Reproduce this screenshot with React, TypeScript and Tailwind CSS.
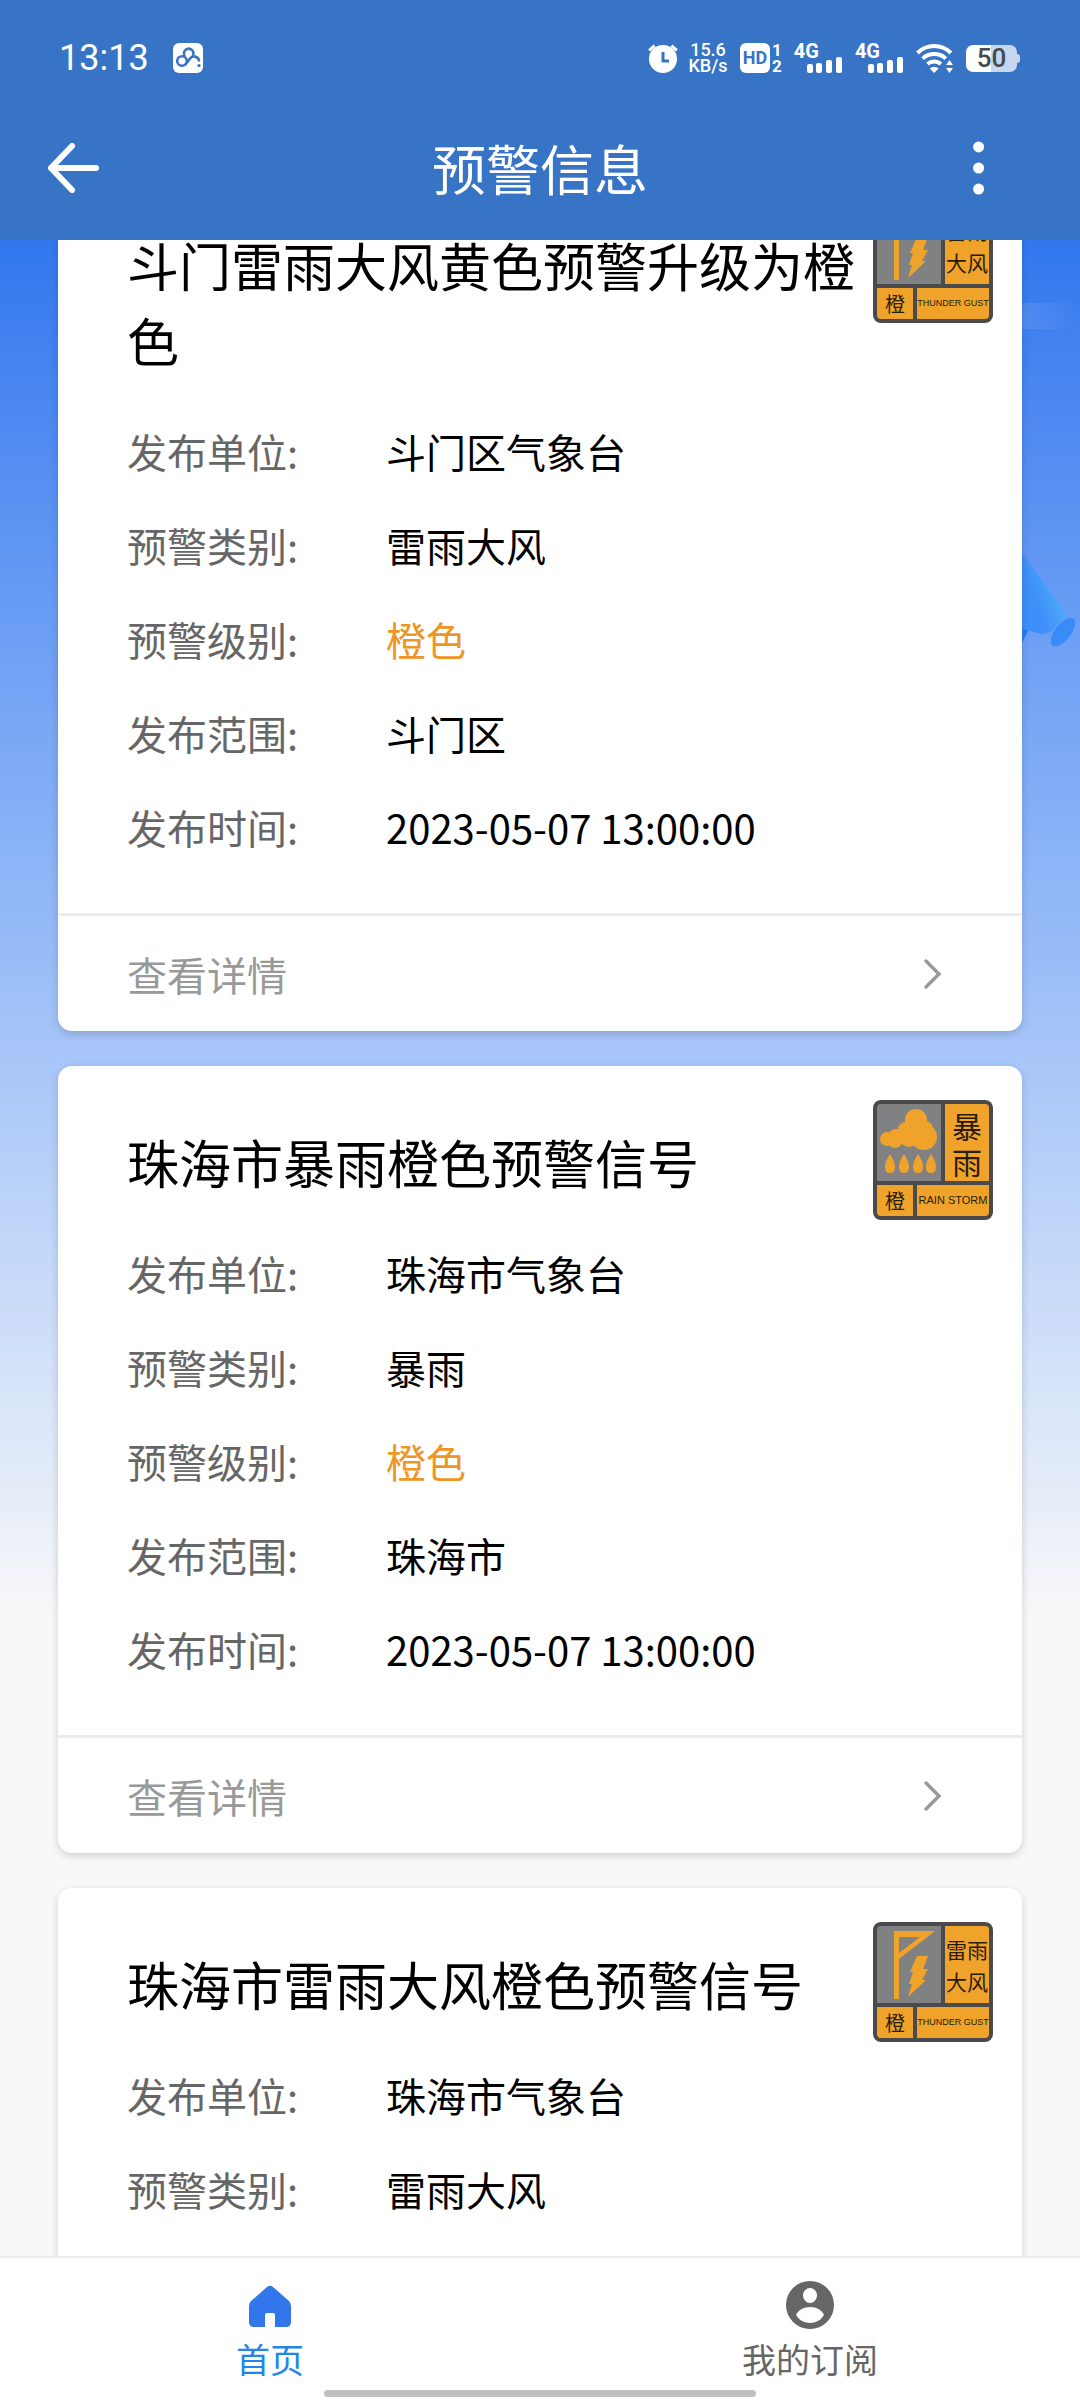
import {useEffect, useRef} from 'react';

type BadgeKind = 'rain' | 'gust';

interface Warning {
    id: number;
    title: string;
    org: string;
    type: string;
    level: string;
    area: string;
    time: string;
    badge: BadgeKind;
}

const WARNINGS: Warning[] = [
    {
        id: 1,
        title: '斗门雷雨大风黄色预警升级为橙色',
        org: '斗门区气象台',
        type: '雷雨大风',
        level: '橙色',
        area: '斗门区',
        time: '2023-05-07 13:00:00',
        badge: 'gust',
    },
    {
        id: 2,
        title: '珠海市暴雨橙色预警信号',
        org: '珠海市气象台',
        type: '暴雨',
        level: '橙色',
        area: '珠海市',
        time: '2023-05-07 13:00:00',
        badge: 'rain',
    },
    {
        id: 3,
        title: '珠海市雷雨大风橙色预警信号',
        org: '珠海市气象台',
        type: '雷雨大风',
        level: '橙色',
        area: '珠海市',
        time: '2023-05-07 13:00:00',
        badge: 'gust',
    },
];

const SAVED_SCROLL = 106;

function SignalBars() {
    return (
        <span className="flex items-end">
            <span className="self-start font-bold text-[20px] leading-4">4G</span>
            <svg width="36" height="30" viewBox="0 0 36 30" fill="currentColor" className="-ml-3">
                <rect x="0" y="21" width="6" height="9" rx="2" />
                <rect x="9" y="20" width="6" height="10" rx="2" />
                <rect x="19" y="17" width="6" height="13" rx="2" />
                <rect x="29" y="14" width="6" height="16" rx="2" />
            </svg>
        </span>
    );
}

function StatusBar() {
    return (
        <div className="flex h-[116px] items-center justify-between pl-[59px] pr-[60px] font-[Roboto,'Liberation_Sans',sans-serif]">
            <div className="flex items-center gap-6">
                <span className="text-[36px] leading-[38px]">13:13</span>
                <svg width="30" height="30" viewBox="0 0 30 30">
                    <rect width="30" height="30" rx="6" fill="#fff" />
                    <g fill="none" stroke="#3874c6" strokeWidth="2.6" strokeLinecap="round">
                        <circle cx="9" cy="18" r="4.8" />
                        <path d="M11.4 12.6a4.8 4.8 0 1 1 8.6 0" />
                        <path d="M12.6 21.2l4.6-5.8a5 5 0 0 1 8.8 2" />
                    </g>
                    <circle cx="26" cy="22.6" r="1.6" fill="#3874c6" />
                </svg>
            </div>
            <div className="flex items-center">
                <svg width="30" height="30" viewBox="0 0 30 30">
                    <circle cx="15" cy="16" r="14" fill="#fff" />
                    <path d="M1.2 7.4L6.6 2.6M28.8 7.4l-5.4-4.8" stroke="#fff" strokeWidth="3" />
                    <path d="M15 9v9h6" fill="none" stroke="#3874c6" strokeWidth="3" />
                </svg>
                <span className="ml-3 flex w-9 flex-col items-center text-[18px] font-medium leading-4">
                    <span>15.6</span>
                    <span>KB/s</span>
                </span>
                <span className="ml-[14px] flex h-[30px] w-[30px] items-center justify-center rounded-[6px] bg-white text-[18px] font-bold leading-none text-[#3874c6]">
                    HD
                </span>
                <span className="ml-[2px] flex flex-col text-[17px] font-bold leading-4">
                    <span>1</span>
                    <span>2</span>
                </span>
                <span className="ml-3 flex gap-3">
                    <SignalBars />
                    <SignalBars />
                </span>
                <svg width="38" height="30" viewBox="0 0 38 30" className="ml-3">
                    <g fill="none" stroke="#fff" strokeWidth="4">
                        <path d="M1.500 10a23.5 23.5 0 0 1 33.400 0" />
                        <path d="M6.6 15.6a17 17 0 0 1 23.2 0" />
                        <path d="M11.4 21a10.4 10.4 0 0 1 13.6 0" />
                    </g>
                    <path d="M13.8 25.4a6.4 6.4 0 0 1 8.8 0L18.2 30z" fill="#fff" />
                    <path d="M33.5 17l3.4 5h-6.8zM33.5 30l3.4-5h-6.8z" fill="#fff" />
                </svg>
                <span className="ml-3 flex items-center">
                    <span className="flex h-[27px] w-[51px] items-center justify-center rounded-[7px] bg-[linear-gradient(90deg,#fff_50%,#c5d6ee_50%)] text-[26px] font-medium leading-none text-[#454a50]">
                        50
                    </span>
                    <span className="h-[9px] w-[3px] rounded-r bg-[#c5d6ee]" />
                </span>
            </div>
        </div>
    );
}

function GustPicture() {
    return (
        <svg viewBox="0 0 64 77" className="h-full w-full" fill="#f0a32a">
            <path d="M17 5h41L22 33v40h-5zM22 11v16l21-16z" fillRule="evenodd" />
            <path d="M40 30h11l-5 13h5l-6 11h4L31 71l4-13h-3l4-12h-3z" />
        </svg>
    );
}

function RainPicture() {
    return (
        <svg viewBox="0 0 64 77" className="h-full w-full" fill="#f0a32a">
            <circle cx="39" cy="16" r="11" />
            <circle cx="29" cy="26" r="8" />
            <circle cx="48" cy="25" r="8" />
            <circle cx="47" cy="33" r="13" />
            <circle cx="32" cy="33" r="10" />
            <circle cx="19" cy="33" r="8" />
            <circle cx="18" cy="37" r="7" />
            <circle cx="10" cy="35" r="7" />
            <path d="M13 50c3 5 5 8 5 13q0 6-5 6t-5-6c0-5 2-8 5-13z" />
            <path d="M27 50c3 5 5 8 5 13q0 6-5 6t-5-6c0-5 2-8 5-13z" />
            <path d="M41 50c3 5 5 8 5 13q0 6-5 6t-5-6c0-5 2-8 5-13z" />
            <path d="M54 50c3 5 5 8 5 13q0 6-5 6t-5-6c0-5 2-8 5-13z" />
        </svg>
    );
}

function WarningBadge({kind}: {kind: BadgeKind}) {
    const gust = kind === 'gust';
    return (
        <div className="flex size-[120px] shrink-0 flex-col gap-1 rounded-lg bg-[#4a4a4c] p-1 text-[#2a1c04]">
            <div className="flex h-[77px] gap-1">
                <div className="w-16 rounded-tl-sm bg-[#808183]">
                    {gust ? <GustPicture /> : <RainPicture />}
                </div>
                <div className="flex flex-1 flex-col items-center justify-center rounded-tr-sm bg-[#f0a32a]">
                    {gust ? (
                        <>
                            <span className="text-[21px] leading-8">雷雨</span>
                            <span className="text-[21px] leading-8">大风</span>
                        </>
                    ) : (
                        <>
                            <span className="text-[30px] leading-9">暴</span>
                            <span className="text-[30px] leading-9">雨</span>
                        </>
                    )}
                </div>
            </div>
            <div className="flex h-[31px] gap-1">
                <div className="flex w-9 items-center justify-center rounded-bl-sm bg-[#f0a32a] text-[20px] leading-none">
                    橙
                </div>
                <div className="flex flex-1 items-center justify-center whitespace-nowrap rounded-br-sm bg-[#f0a32a] font-['Liberation_Sans_Narrow','Liberation_Sans',sans-serif] leading-none">
                    {gust ? (
                        <span className="text-[9px]">THUNDER GUST</span>
                    ) : (
                        <span className="text-[11px]">RAIN STORM</span>
                    )}
                </div>
            </div>
        </div>
    );
}

function WarningCard({warning}: {warning: Warning}) {
    const rows = [
        {label: '发布单位:', value: warning.org},
        {label: '预警类别:', value: warning.type},
        {label: '预警级别:', value: warning.level, color: 'text-[#ee9526]'},
        {label: '发布范围:', value: warning.area},
        {label: '发布时间:', value: warning.time},
    ];

    return (
        <article className="rounded-[14px] bg-white shadow-[0_3px_9px_rgba(0,0,0,0.16)]">
            <div className="flex items-start justify-between pl-[69px] pr-[29px]">
                <h2 className="w-[734px] pt-[58px] text-[52px] leading-[75px] text-black">
                    {warning.title}
                </h2>
                {/* the badge may reach below a one-line title */}
                <div className="-mb-6 pt-[34px]">
                    <WarningBadge kind={warning.badge} />
                </div>
            </div>
            <dl className="px-[69px] pb-[39px] pt-[27px] text-[40px] leading-[94px]">
                {rows.map((row) => (
                    <div key={row.label} className="flex">
                        <dt className="w-[259px] text-[#666]">{row.label}</dt>
                        <dd className={row.color ?? 'text-black'}>{row.value}</dd>
                    </div>
                ))}
            </dl>
            <a
                href="#detail"
                className="flex h-[118px] items-center justify-between border-t-[3px] border-[#ededed] pl-[69px] pr-20 text-[40px] text-[#999]"
            >
                查看详情
                <svg width="18" height="30" viewBox="0 0 18 30" fill="none" stroke="currentColor" strokeWidth="3.4" strokeLinecap="round">
                    <path d="M2 2l13 13L2 28" />
                </svg>
            </a>
        </article>
    );
}

function Backdrop() {
    return (
        <div className="absolute inset-0 bg-[#f8f8f8]">
            <div className="relative h-[1380px] bg-linear-to-b from-[#3277ee] to-[#f8f8f8]">
                <div className="absolute right-0 top-[63px] h-[26px] w-[58px] bg-linear-to-r from-white/10 to-transparent" />
                <svg width="64" height="110" viewBox="0 0 64 110" className="absolute right-0 top-[305px]">
                    <defs>
                        <linearGradient id="cone" x1="0" y1="1" x2="1" y2="0.4">
                            <stop offset="0.45" stopColor="#3f8ffa" />
                            <stop offset="1" stopColor="#55b8f8" />
                        </linearGradient>
                    </defs>
                    <path d="M0 72l16 6L0 110z" fill="#2a7df0" />
                    <path d="M0 0l51 69-14 16q-8 6-16 3L0 82z" fill="url(#cone)" />
                    <ellipse cx="47" cy="87" rx="8" ry="17" transform="rotate(38 47 87)" fill="#378cf8" />
                </svg>
            </div>
        </div>
    );
}

function TabBar() {
    return (
        <nav className="relative z-10 border-t-2 border-[#ebebeb] bg-white">
            <div className="grid h-[132px] grid-cols-2 text-[34px] leading-[50px]">
                <a href="#home" className="flex flex-col items-center pt-5 text-[#2186e8]">
                    <svg width="52" height="56" viewBox="0 0 52 56" fill="#3276ec">
                        <path d="M29 9l16 14q2 2 2 5v16q0 5-5 5H31V37q0-2-2-2h-6q-2 0-2 2v12H10q-5 0-5-5V28q0-3 2-5L23 9q3-2.600 6 0z" />
                    </svg>
                    首页
                </a>
                <a href="#subscriptions" className="flex flex-col items-center pt-5 text-[#666]">
                    <svg width="52" height="56" viewBox="0 0 52 56">
                        <circle cx="26" cy="27" r="24" fill="currentColor" />
                        <ellipse cx="26" cy="17.500" rx="7" ry="7.500" fill="#fff" />
                        <path d="M12 37q4-8 14-8t14 8q-5 8-14 8t-14-8z" fill="#fff" />
                    </svg>
                    我的订阅
                </a>
            </div>
            <div className="mx-auto mb-[3px] h-[7px] w-2/5 rounded-full bg-[#c0c0c0]" />
        </nav>
    );
}

export default function App() {
    const listRef = useRef<HTMLDivElement>(null);

    useEffect(() => {
        if (listRef.current) {
            listRef.current.scrollTop = SAVED_SCROLL;
        }
    }, []);

    return (
        <div className="flex h-screen flex-col font-['Noto_Sans_CJK_SC',sans-serif]">
            <header className="relative z-10 bg-[#3874c6] text-white">
                <StatusBar />
                <div className="flex h-[124px] items-center justify-between pb-[20px] pl-[47px] pr-[84px]">
                    <button type="button" aria-label="返回" className="flex w-[70px]">
                        <svg width="54" height="50" viewBox="0 0 54 50" fill="none" stroke="#fff" strokeWidth="6" strokeLinecap="round" strokeLinejoin="round">
                            <path d="M25 3L4 25l21 22M4 25h45" />
                        </svg>
                    </button>
                    <h1 className="text-[54px] leading-[74px]">预警信息</h1>
                    <button type="button" aria-label="更多" className="flex w-[33px] justify-end">
                        <svg width="36" height="60" viewBox="0 0 36 60" fill="#fff">
                            <circle cx="17" cy="7" r="6" />
                            <circle cx="17" cy="30" r="6" />
                            <circle cx="17" cy="53" r="6" />
                        </svg>
                    </button>
                </div>
            </header>
            <main className="relative min-h-0 flex-1">
                <Backdrop />
                <div ref={listRef} className="relative h-full overflow-y-auto [scrollbar-width:none]">
                    <div className="flex flex-col gap-[35px] px-[58px] py-[35px]">
                        {WARNINGS.map((warning) => (
                            <WarningCard key={warning.id} warning={warning} />
                        ))}
                    </div>
                </div>
            </main>
            <TabBar />
        </div>
    );
}
